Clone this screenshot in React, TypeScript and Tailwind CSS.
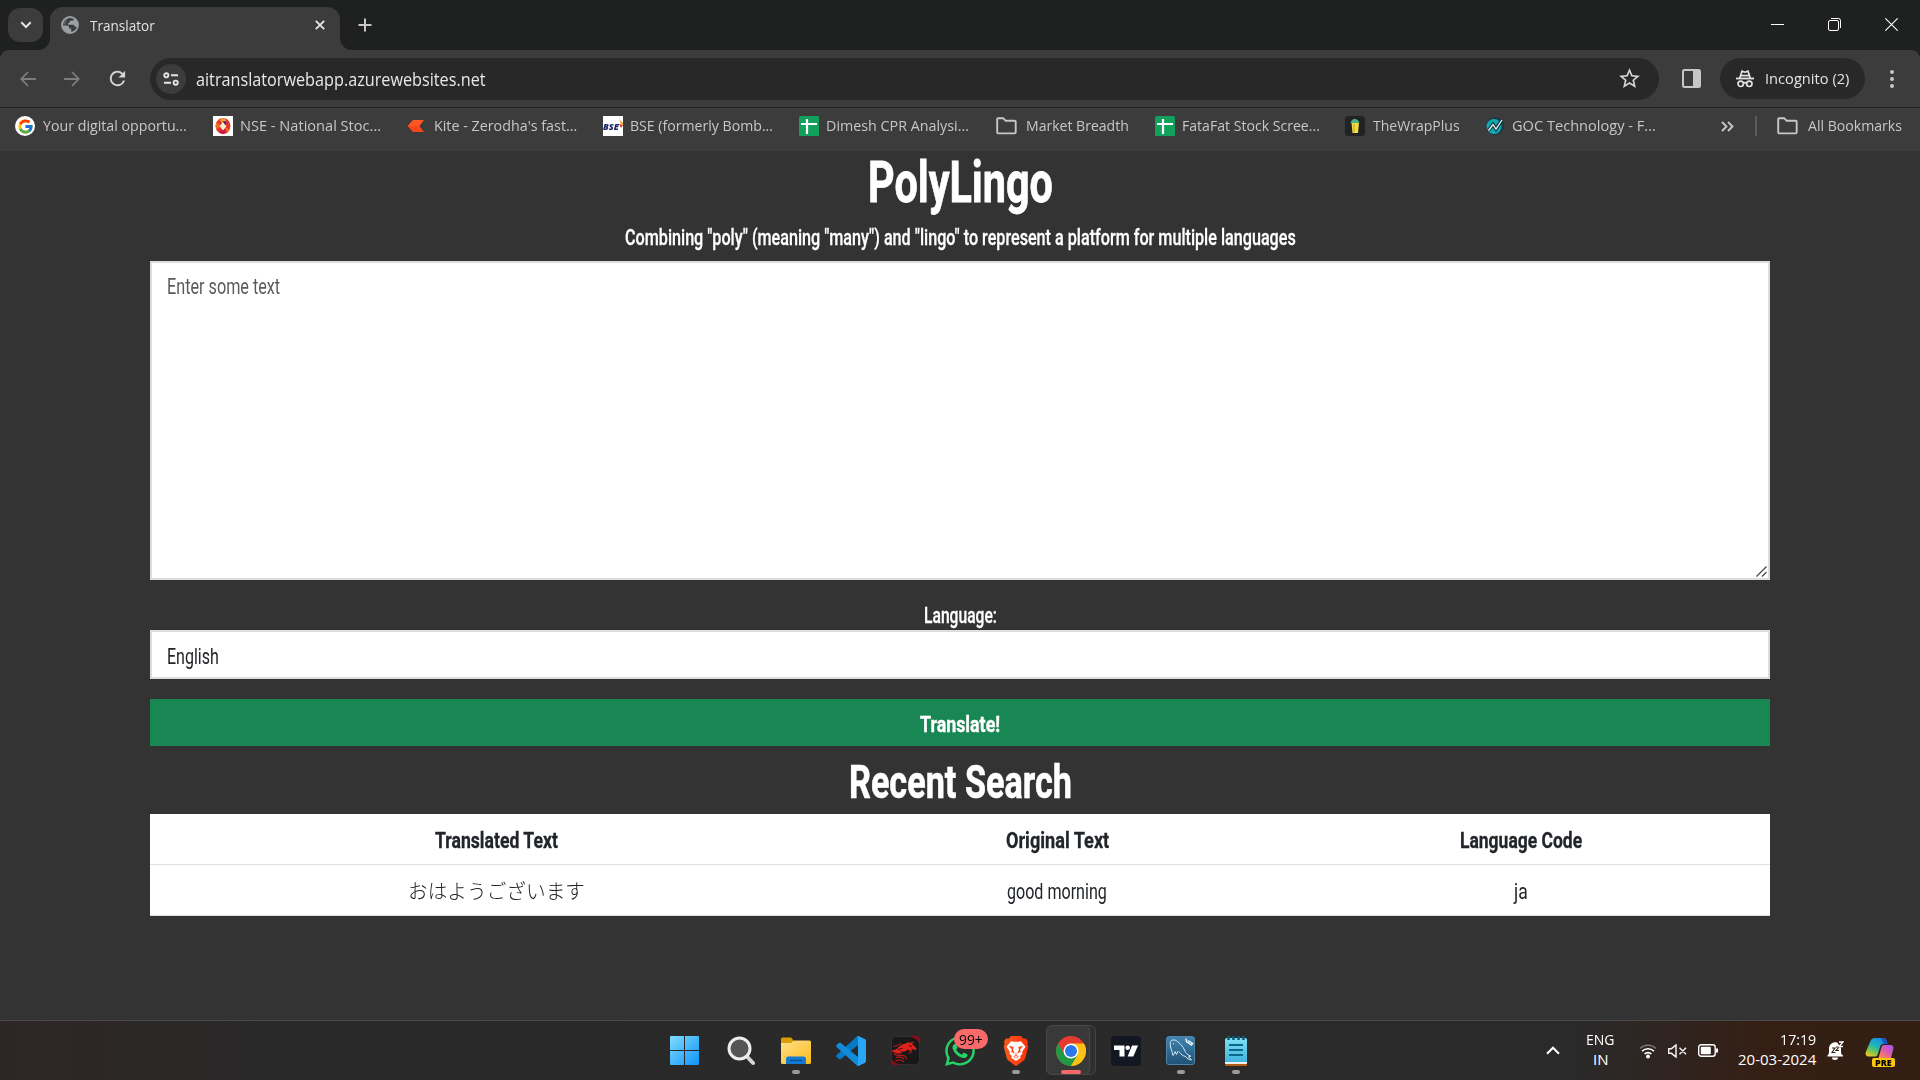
import React, { useLayoutEffect, useRef } from "react";
import { FcGoogle } from "react-icons/fc";
import { FaWhatsapp } from "react-icons/fa";
import { MdStarOutline, MdRefresh } from "react-icons/md";

/* Text squeezed horizontally so that it fills the width of its own box. */
function Fit({ className = "", children }: { className?: string; children: React.ReactNode }) {
  const outer = useRef<HTMLSpanElement>(null);
  const inner = useRef<HTMLSpanElement>(null);
  useLayoutEffect(() => {
    const o = outer.current;
    const i = inner.current;
    if (o && i) i.style.transform = `scaleX(${o.clientWidth / i.offsetWidth})`;
  });
  return (
    <span ref={outer} className={`block shrink-0 text-left ${className}`}>
      <span ref={inner} className="inline-block origin-left whitespace-nowrap">
        {children}
      </span>
    </span>
  );
}

function TabStrip() {
  return (
    <div className="flex h-[50px] items-start bg-[#1f2120] text-[#e3e3e3]">
      <div className="ml-2 mt-2 flex h-[34px] w-[35px] items-center justify-center rounded-xl bg-[#3c3c3c]">
        <svg width="12" height="8" viewBox="0 0 12 8" fill="none" stroke="currentColor" strokeWidth="2">
          <path d="M1.300 1.200 6 6l4.700-4.800" />
        </svg>
      </div>
      <div className="relative ml-[7px] mt-[7px] flex h-[43px] w-[290px] items-center rounded-t-[13px] bg-[#3c3c3c] pb-[8px] pl-[11px]">
        <svg className="absolute -left-3 bottom-0" width="12" height="12" viewBox="0 0 12 12">
          <path d="M12 0v12H0A12 12 0 0 0 12 0z" fill="#3c3c3c" />
        </svg>
        <svg className="absolute -right-3 bottom-0" width="12" height="12" viewBox="0 0 12 12">
          <path d="M0 0v12h12A12 12 0 0 1 0 0z" fill="#3c3c3c" />
        </svg>
        <svg width="18" height="18" viewBox="0 0 18 18">
          <circle cx="9" cy="9" r="8" fill="#3c3c3c" stroke="#9aa0a6" strokeWidth="1.800" />
          <path d="M1.500 9.500h4.500c1 0 2 .8 2 1.800v1.200h2.200V17A8 8 0 0 1 1.500 9.500z" fill="#9aa0a6" />
          <path d="M8.500 1.200C10.500 1 12.500 2 13 2.500c0 1.500-1 2.200-2.500 2.200H8.800v2H7v2h5c1.200 0 1.800 1 1.800 2h1.400c.8 0 1.300.4 1.500 1A8 8 0 0 0 9 1z" fill="#9aa0a6" />
          <path d="M1.500 8.500A8 8 0 0 1 8 1.200L6 4 4.500 8.500z" fill="#9aa0a6" fillOpacity=".35" />
        </svg>
        <Fit className="ml-[11px] w-[65px] text-[15px] leading-5">Translator</Fit>
        <svg className="ml-[160px]" width="10" height="10" viewBox="0 0 10 10" stroke="currentColor" strokeWidth="1.900">
          <path d="M.8.8l8.400 8.400M9.200.8.8 9.200" />
        </svg>
      </div>
      <svg className="ml-[18px] mt-[18px]" width="14" height="14" viewBox="0 0 14 14" stroke="#c7c7c7" strokeWidth="2">
        <path d="M7 .5v13M.5 7h13" />
      </svg>
      <div className="ml-auto mr-[22px] mt-[18px] flex items-center gap-[44px] text-white">
        <svg width="13" height="13" viewBox="0 0 13 13" stroke="currentColor">
          <path d="M0 6.500h13" />
        </svg>
        <svg width="13" height="13" viewBox="0 0 13 13" fill="none" stroke="currentColor">
          <rect x=".5" y="2.500" width="10" height="10" rx="1.500" />
          <path d="M3 .5h7.500a2 2 0 0 1 2 2V10" />
        </svg>
        <svg width="13" height="13" viewBox="0 0 13 13" stroke="currentColor" strokeWidth="1.100">
          <path d="M.3.3l12.400 12.400M12.700.3.3 12.700" />
        </svg>
      </div>
    </div>
  );
}

function Incognito() {
  return (
    <svg width="18" height="18" viewBox="0 0 18 18" fill="none" stroke="#e3e3e3" strokeWidth="1.700">
      <path d="M0 8.500h18" strokeWidth="1.800" />
      <path d="M3.800 8 6 1.200l3 1 3-1L14.200 8" />
      <path d="M5 5.600h8" />
      <circle cx="4.700" cy="13.800" r="2.700" />
      <circle cx="13.300" cy="13.800" r="2.700" />
      <path d="M7.300 13.300c1-.8 2.400-.8 3.400 0" />
    </svg>
  );
}

function Toolbar() {
  return (
    <div className="bg-[#1f2120]">
      <div className="flex h-[57px] items-center rounded-t-[9px] bg-[#3c3c3c]">
        <svg className="ml-5" width="16" height="16" viewBox="0 0 16 16" fill="none" stroke="#7d7d7d" strokeWidth="1.800">
          <path d="M16 8H1.500M8 1 1.300 8 8 15" />
        </svg>
        <svg className="ml-7" width="16" height="16" viewBox="0 0 16 16" fill="none" stroke="#7d7d7d" strokeWidth="1.800">
          <path d="M0 8h14.500M8 1l6.700 7L8 15" />
        </svg>
        <MdRefresh className="ml-[26px] size-[23px] text-[#d4d4d4]" />
        <div className="ml-[21px] flex h-[42px] w-[1509px] items-center rounded-full bg-[#282828]">
          <div className="ml-1.5 flex size-[30px] items-center justify-center rounded-full bg-[#3c3c3c]">
            <svg width="16" height="14" viewBox="0 0 16 14" fill="none" stroke="#e3e3e3" strokeWidth="1.900">
              <circle cx="3.300" cy="3.300" r="2.100" />
              <path d="M8 3.300h7M1 10.700h7" />
              <circle cx="12.700" cy="10.700" r="2.100" />
            </svg>
          </div>
          <Fit className="ml-[10px] w-[290px] text-[17.500px] leading-6 text-[#e8e8e8]">aitranslatorwebapp.azurewebsites.net</Fit>
          <MdStarOutline className="ml-auto mr-[17px] size-[25px] text-[#d4d4d4]" />
        </div>
        <svg className="ml-[23px]" width="19" height="19" viewBox="0 0 19 19">
          <rect x="1" y="1" width="17" height="17" rx="1.500" fill="none" stroke="#c7c7c7" strokeWidth="2" />
          <path d="M11 1h7v17h-7z" fill="#c7c7c7" />
        </svg>
        <div className="ml-[19px] flex h-[41px] w-[145px] items-center rounded-full bg-[#282828] pl-4">
          <Incognito />
          <Fit className="-mt-px ml-[11px] w-[84px] text-[15px] leading-5 text-[#e3e3e3]">Incognito (2)</Fit>
        </div>
        <div className="ml-[25px] flex flex-col gap-[3px]">
          <span className="size-1 rounded-full bg-[#c7c7c7]" />
          <span className="size-1 rounded-full bg-[#c7c7c7]" />
          <span className="size-1 rounded-full bg-[#c7c7c7]" />
        </div>
      </div>
    </div>
  );
}

function Folder() {
  return (
    <svg width="21" height="18" viewBox="0 0 21 18" fill="none" stroke="#c7c7c7" strokeWidth="1.900" strokeLinejoin="round">
      <path d="M1.200 2.200a1 1 0 0 1 1-1h5l2.300 2.500h9.200a1 1 0 0 1 1 1v10.500a1.200 1.200 0 0 1-1.200 1.200H2.400a1.200 1.200 0 0 1-1.200-1.200z" />
    </svg>
  );
}

function Sheet() {
  return (
    <svg width="20" height="20" viewBox="0 0 20 20">
      <rect width="20" height="20" rx="1.500" fill="#12a05c" />
      <path d="M2 8h16M8 3v15" stroke="#fff" strokeWidth="2.200" />
    </svg>
  );
}

function Nse() {
  return (
    <svg width="20" height="20" viewBox="0 0 20 20">
      <path d="M0 0h20v20H0z" fill="#fff" />
      <path d="M10 2l4 1 2.500 3L17.500 10l-1 4-2.500 3-4 1.200L6 17l-2.500-3-1-4 1-4L6 3z" fill="#e3342f" />
      <path d="M10 2l3.500 2L10 8 6.500 4z" fill="#f7a12c" />
      <path d="M3.500 6 8 10l-4.500 4L2.500 10zM16.500 14 12 10.500 14 17z" fill="#ef6a25" />
      <path d="M10 18 6.500 16.500 10 12l3.500 4.500z" fill="#c91a50" />
      <path d="M10 6l3.500 4-3.500 4.500L6.500 10z" fill="#fdeccb" />
      <path d="m9.500 5 4 .5-1 4z" fill="#45307f" />
    </svg>
  );
}

function Kite() {
  return (
    <svg width="20" height="20" viewBox="0 0 20 20">
      <path d="M1.500 10 7 4h11l-4.500 6z" fill="#ff5722" />
      <path d="M1.500 10l5.500 6h11l-4.500-6z" fill="#f6461a" />
    </svg>
  );
}

function Bse() {
  return (
    <span className="relative flex size-5 items-center overflow-hidden bg-white">
      <Fit className="w-4 pt-px text-[8px] font-black italic leading-3 text-[#1f2a6b]">BSE</Fit>
      <svg className="absolute right-0 top-0.5" width="4" height="11" viewBox="0 0 4 11">
        <path d="M0 1 4 5v2L2 6z" fill="#f5a11c" />
        <path d="M0 6l4 1-2 3z" fill="#e0342b" />
      </svg>
    </span>
  );
}

function Wrap() {
  return (
    <svg width="20" height="20" viewBox="0 0 20 20">
      <rect width="20" height="20" rx="3" fill="#222" />
      <path d="M6.500 6.500h7.500l-1 10.500H7.500z" fill="#f5dd45" />
      <path d="M5.500 7c.5-2.500 2-3.500 4-4.200L13 4l1.500 3z" fill="#4bb08b" />
      <path d="M9 8v8" stroke="#b99d20" />
    </svg>
  );
}

function Goc() {
  return (
    <svg width="20" height="20" viewBox="0 0 20 20">
      <circle cx="10" cy="10" r="9" fill="#1b3b41" />
      <circle cx="9" cy="10.500" r="7.500" fill="#12a9b4" />
      <path d="m3.500 14.500 4.500-6 3 4.500 6-9" fill="none" stroke="#12353b" strokeWidth="3.600" />
      <path d="m3.500 14.500 4.500-6 3 4.500 6-9" fill="none" stroke="#e8f6f6" strokeWidth="1.300" />
    </svg>
  );
}

function Bookmark({ icon, text, box, width }: { icon: React.ReactNode; text: string; box: string; width: string }) {
  return (
    <div className={`flex shrink-0 items-center ${box}`}>
      {icon}
      <Fit className={`-mt-0.5 ml-auto text-[15px] leading-5 ${width}`}>{text}</Fit>
    </div>
  );
}

function BookmarkBar() {
  return (
    <div className="flex h-[44px] items-center border-t border-[#222423] bg-[#3c3c3c] pb-[7px] pl-[15px] text-[#c7c7c7]">
      <Bookmark
        icon={
          <span className="flex size-5 items-center justify-center rounded-full bg-white">
            <FcGoogle className="size-[17px]" />
          </span>
        }
        text="Your digital opportu..."
        box="w-[172px]"
        width="w-[144px]"
      />
      <Bookmark icon={<Nse />} text="NSE - National Stoc..." box="ml-[26px] w-[168px]" width="w-[141px]" />
      <Bookmark icon={<Kite />} text="Kite - Zerodha's fast..." box="ml-[25px] w-[171px]" width="w-[143px]" />
      <Bookmark icon={<Bse />} text="BSE (formerly Bomb..." box="ml-[26px] w-[170px]" width="w-[143px]" />
      <Bookmark icon={<Sheet />} text="Dimesh CPR Analysi..." box="ml-[26px] w-[170px]" width="w-[143px]" />
      <Bookmark icon={<Folder />} text="Market Breadth" box="ml-[27px] w-[133px]" width="w-[103px]" />
      <Bookmark icon={<Sheet />} text="FataFat Stock Scree..." box="ml-[26px] w-[165px]" width="w-[138px]" />
      <Bookmark icon={<Wrap />} text="TheWrapPlus" box="ml-[25px] w-[115px]" width="w-[87px]" />
      <Bookmark icon={<Goc />} text="GOC Technology - F..." box="ml-[25px] w-[171px]" width="w-[144px]" />
      <svg className="ml-[65px]" width="13" height="11" viewBox="0 0 13 11" fill="none" stroke="currentColor" strokeWidth="1.900">
        <path d="m1 1 4.500 4.500L1 10M7 1l4.500 4.500L7 10" />
      </svg>
      <div className="ml-[21px] h-5 w-0.5 bg-[#5c5c5c]" />
      <Bookmark icon={<Folder />} text="All Bookmarks" box="ml-[20px] w-[125px]" width="w-[94px]" />
    </div>
  );
}

const headCell = "flex items-center justify-center border-b border-[#dee2e6] pt-px font-bold";
const bodyCell = "flex items-center justify-center border-b border-[#dee2e6] pt-px";

function Page() {
  return (
    <main className="flex h-[869px] flex-col items-stretch bg-[#333333] px-[150px] font-['Roboto','Noto_Sans_CJK_JP',sans-serif] text-[22.500px] text-white">
      <h1 className="flex h-[66px] justify-center">
        <Fit className="-mt-px w-[185px] text-[57px] font-bold leading-[66px] [-webkit-text-stroke:0.8px_white]">PolyLingo</Fit>
      </h1>
      <p className="flex h-10 justify-center">
        <Fit className="w-[671px] font-medium leading-10 [-webkit-text-stroke:0.3px_white]">
          Combining "poly" (meaning "many") and "lingo" to represent a platform for multiple languages
        </Fit>
      </p>
      <div className="mt-1 flex h-[319px] justify-between border-2 border-[#dddddd] bg-white">
        <Fit className="ml-[15px] mt-[8px] w-[113px] leading-[30px] text-[#595c5f]">Enter some text</Fit>
        <svg className="mb-px mr-px self-end" width="11" height="11" viewBox="0 0 11 11" stroke="#444" strokeWidth="1.200">
          <path d="M.5 10.500l10-10M6 10.500l4.500-4.500" />
        </svg>
      </div>
      <div className="mt-[21px] flex h-[29px] justify-center">
        <Fit className="w-[73px] font-medium leading-7 [-webkit-text-stroke:0.3px_white]">Language:</Fit>
      </div>
      <div className="flex h-[49px] items-center border-2 border-[#dddddd] bg-white pl-[15px] pt-[2px] text-[#212529]">
        <Fit className="w-[52px] leading-7">English</Fit>
      </div>
      <div className="mt-5 flex h-[47px] items-center justify-center bg-[#198754] pt-0.5">
        <Fit className="w-[80px] font-bold leading-7 [-webkit-text-stroke:0.4px_white]">Translate!</Fit>
      </div>
      <h2 className="flex h-[68px] justify-center pt-[5px]">
        <Fit className="w-[223px] text-[46px] font-bold leading-[62px] [-webkit-text-stroke:0.6px_white]">Recent Search</Fit>
      </h2>
      <div className="grid h-[102px] grid-cols-[692px_430px_498px] grid-rows-2 bg-white text-[#212529]">
        <div className={headCell}>
          <Fit className="w-[123px] leading-7 [-webkit-text-stroke:0.3px_#212529]">Translated Text</Fit>
        </div>
        <div className={headCell}>
          <Fit className="w-[103px] leading-7 [-webkit-text-stroke:0.3px_#212529]">Original Text</Fit>
        </div>
        <div className={headCell}>
          <Fit className="w-[122px] leading-7 [-webkit-text-stroke:0.3px_#212529]">Language Code</Fit>
        </div>
        <div className={bodyCell}>
          <Fit className="w-[177px] font-['Noto_Sans_CJK_JP',sans-serif] text-[20px] font-light leading-7">おはようございます</Fit>
        </div>
        <div className={bodyCell}>
          <Fit className="w-[100px] leading-7">good morning</Fit>
        </div>
        <div className={bodyCell}>
          <Fit className="w-[14px] leading-7">ja</Fit>
        </div>
      </div>
    </main>
  );
}

function Cell({ children, mark }: { children: React.ReactNode; mark?: boolean }) {
  return (
    <div className="relative flex h-full w-[55px] shrink-0 items-center justify-center">
      {children}
      {mark && <span className="absolute bottom-[6px] h-1 w-2 rounded-full bg-[#9a9a9a]" />}
    </div>
  );
}

function Taskbar() {
  return (
    <footer className="flex h-[60px] items-center border-t border-[#4a4a4a] bg-[linear-gradient(90deg,#2d2624_0%,#2a2929_14%,#2a2a2a_82%,#2f2420_87%,#351f14_92%,#331e14_100%)] pl-[656px] text-white">
      <div className="flex h-full w-[57px] shrink-0 items-center justify-center">
        <svg width="29" height="29" viewBox="0 0 29 29">
          <defs>
            <linearGradient id="win" x1="0" y1="0" x2="1" y2="1">
              <stop offset="0" stopColor="#7fdcff" />
              <stop offset="1" stopColor="#0f94f7" />
            </linearGradient>
            <mask id="panes">
              <path d="M0 1a1 1 0 0 1 1-1h13v14H0zM15 0h13a1 1 0 0 1 1 1v13H15zM0 15h14v14H1a1 1 0 0 1-1-1zM15 15h14v13a1 1 0 0 1-1 1H15z" fill="#fff" />
            </mask>
          </defs>
          <rect width="29" height="29" fill="url(#win)" mask="url(#panes)" />
        </svg>
      </div>
      <Cell>
        <svg width="28" height="30" viewBox="0 0 28 30">
          <path d="m18.500 19 7.500 8" stroke="#d3d6da" strokeWidth="4" strokeLinecap="round" />
          <circle cx="12.500" cy="12.500" r="10.500" fill="#555" stroke="#eceef0" strokeWidth="3" />
        </svg>
      </Cell>
      <Cell mark>
        <svg width="30" height="28" viewBox="0 0 30 28">
          <defs>
            <linearGradient id="fold" x1="0" y1="0" x2="1" y2="1">
              <stop offset="0" stopColor="#ffe08a" />
              <stop offset="1" stopColor="#fbbb1b" />
            </linearGradient>
          </defs>
          <path d="M0 2a1.500 1.500 0 0 1 1.500-1.500H10L13 4v5H0z" fill="#dc9c0a" />
          <path d="M0 6h10l3-2.500h15.500A1.500 1.500 0 0 1 30 5v20.500a1.500 1.500 0 0 1-1.500 1.500h-27A1.500 1.500 0 0 1 0 25.500z" fill="url(#fold)" />
          <path d="M5 27v-5a2.500 2.500 0 0 1 2.500-2.500h15A2.500 2.500 0 0 1 25 22v5z" fill="#1379d2" />
          <path d="M9 23.500h12" stroke="#0a4f93" strokeWidth="1.200" />
        </svg>
      </Cell>
      <Cell>
        <svg width="30" height="30" viewBox="0 0 30 30">
          <path d="M22 0v9L4.500 23.200a1.200 1.200 0 0 1-1.600-.1L.6 20.900a1.200 1.200 0 0 1 0-1.800L20.600.8z" fill="#0879c4" />
          <path d="M22 30v-9L4.500 6.800a1.200 1.200 0 0 0-1.600.1L.6 9.100a1.200 1.200 0 0 0 0 1.800l20 18.300z" fill="#128bd8" />
          <path d="M20.500.7c.5-.5 1.500-.9 2.300-.5l6 2.800c.8.400 1.200 1 1.200 1.800v20.400c0 .8-.4 1.400-1.200 1.800l-6 2.800c-.8.400-1.800 0-2.300-.5 1 .7 1.500.1 1.500-.8V1.500c0-.9-.5-1.500-1.500-.8z" fill="#2aa7f4" />
        </svg>
      </Cell>
      <Cell>
        <svg width="29" height="29" viewBox="0 0 29 29">
          <rect x=".5" y=".5" width="28" height="28" rx="4" fill="#181818" stroke="#303030" />
          <path d="M19.500 0H25a4 4 0 0 1 4 4v5c-1-2-1.500-4-3.500-5.500S21.500 2 19.500 0zM8.500 29H4a4 4 0 0 1-4-4v-1.500c2 0 2.500 2 4 3s3.500 1 4.500 2.500z" fill="#8e0b18" />
          <path d="M1 14.500c3.500-.5 5-1.500 6.500-3.500L11 8.500l5-1.500 1.500-1.800-.3 1.800c2-.8 4.500-1 6.500-.5l-3 1.200 2.600 2.300 2 2-.2 2.500-2.600-1.200-2.500.3 1.500 1.800-2.500-.3-2-1.600-2.500 1.800-3.500.5-3-.3 4 1.500-3.500.6c-2.500 0-5-1.200-7.500-2.100z" fill="#e0201b" />
          <path d="M3 17.500c2 2 5 2 8 2s4.500 1.500 4.500 4M5 21.500c2.500-1 6-.5 8 2M4.500 25c3-1.800 6-1 8.500 1M20 14c.8 1.800-.4 3.200-2.200 3.200" fill="none" stroke="#c51a18" strokeWidth="1.100" />
          <path d="M2 10.500c3-.8 5-1 8-3" fill="none" stroke="#e0201b" strokeWidth=".8" />
          <path d="M18 9.500l3 1.200M7 13.500l4.500-1.200" stroke="#181818" strokeWidth=".9" />
        </svg>
      </Cell>
      <Cell>
        <FaWhatsapp className="-ml-px mt-px size-[34px] text-[#25d366]" />
        <span className="absolute left-[21px] top-2 flex h-5 w-[34px] items-center justify-center rounded-full bg-[#f8696a] text-black">
          <Fit className="w-6 text-[15px] leading-5">99+</Fit>
        </span>
      </Cell>
      <Cell mark>
        <svg width="26" height="30" viewBox="0 0 26 30">
          <defs>
            <linearGradient id="brave" x1="0" y1="0" x2="1" y2="0">
              <stop offset="0" stopColor="#fb5a1c" />
              <stop offset="1" stopColor="#fb2f0c" />
            </linearGradient>
          </defs>
          <path d="M8 0h10l2.500 2.800L23 2.500l2 3-.6 2.300.9 3L22.300 22c-.3 1.200-1 2-2 2.700L14 29.400c-.7.500-1.300.5-2 0l-6.300-4.700c-1-.7-1.700-1.500-2-2.700L.7 10.800l.9-3L1 5.500l2-3 2.500.3z" fill="url(#brave)" />
          <path d="M8 5.200l2.500.5h5l2.500-.5 4.500 5.500-3.300 5 .3 2-2.500 2.500 1 1.300L13 25l-5-3.500 1-1.300-2.500-2.500.3-2-3.300-5z" fill="#fff" />
          <path d="M5.800 9.800l5 1.200-.8 2.600 1.200 3L13 18l1.800-1.400 1.200-3-.8-2.600 5-1.200-3 3.700.4 2.500-3 1.200L13 18.800l-1.600-1.600-3-1.200.4-2.500zM13 18.500l2.800 2.200L13 22.500l-2.800-1.800z" fill="#fb4616" />
          <path d="M13 19.400l1.800 1.300L13 21.800l-1.800-1.100z" fill="#fff" />
        </svg>
      </Cell>
      <div className="relative flex h-full w-[55px] shrink-0 items-center justify-center">
        <span className="absolute left-3 top-1 h-[50px] w-[41px] rounded-md border border-[#454545] bg-[#2f2f2f]" />
        <span className="absolute left-[3px] top-1 h-[50px] w-[44px] rounded-md border border-[#484848] bg-[#393939]" />
        <svg className="relative" width="30" height="30" viewBox="0 0 30 30">
          <circle cx="15" cy="15" r="15" fill="#e33b2e" />
          <path d="M15 7.500h13A15 15 0 0 1 14.500 30l7-11.200z" fill="#fbc116" />
          <path d="M2 7.500 8.500 18.800 15 22.500l6.500-3.700L14.800 30A15 15 0 0 1 2 7.500z" fill="#229a45" />
          <circle cx="15" cy="15" r="7.500" fill="#fff" />
          <circle cx="15" cy="15" r="6" fill="#2b78ea" />
        </svg>
        <span className="absolute bottom-[6px] h-1 w-5 rounded-full bg-[#f8696a]" />
      </div>
      <Cell>
        <svg width="30" height="30" viewBox="0 0 30 30">
          <rect width="30" height="30" rx="4" fill="#131722" />
          <path d="M3 9.500h10.500V20.500H8.500V14H3z" fill="#fff" />
          <circle cx="16.700" cy="11.700" r="2.300" fill="#fff" />
          <path d="M21 9.500h6l-4.700 11h-5.700z" fill="#fff" />
        </svg>
      </Cell>
      <Cell mark>
        <svg width="29" height="29" viewBox="0 0 29 29">
          <defs>
            <linearGradient id="sql" x1="0" y1="0" x2="0" y2="1">
              <stop offset="0" stopColor="#4085b4" />
              <stop offset="1" stopColor="#1f5275" />
            </linearGradient>
          </defs>
          <rect x=".5" y=".5" width="28" height="28" rx="2.500" fill="url(#sql)" stroke="#4d86a8" />
          <path d="M7 19.500C6.500 15.500 3.500 11 4.300 6.500 5 3.500 8.500 3 11.500 5.500c3 2.300 5.500 5 7 8.500.8 2 1.500 3.500 3.200 4.500l3 1.700-2.200.6 3 3.200c-2.500-.3-4.500-1.500-5.800-3.500-2.700-.5-4.700-2-6.700-5" fill="none" stroke="#dce9f2" strokeWidth="1" strokeLinejoin="round" />
          <path d="M7 19.500c1-.8 1.200-2.500 2-4l1.500 3c.6-1 .8-2.200 1.500-3.500M7 7.300l1 .8" fill="none" stroke="#dce9f2" strokeWidth="1" />
          <path d="M20 2.500l.5 3L25.500 9l1-1.500L22 4.500" fill="none" stroke="#eef4f8" strokeWidth="1.500" />
        </svg>
      </Cell>
      <Cell mark>
        <svg width="22" height="30" viewBox="0 0 22 30">
          <defs>
            <linearGradient id="note" x1="0" y1="0" x2="0" y2="1">
              <stop offset="0" stopColor="#7fe0f5" />
              <stop offset="1" stopColor="#3fb4dc" />
            </linearGradient>
          </defs>
          <path d="M0 27h22v1.500a1.500 1.500 0 0 1-1.500 1.500h-19A1.500 1.500 0 0 1 0 28.500z" fill="#b65c12" />
          <path d="M0 25h22v3H0z" fill="#eee" />
          <path d="M0 3.500A1.500 1.500 0 0 1 1.500 2h19A1.500 1.500 0 0 1 22 3.500V26H0z" fill="url(#note)" />
          <path d="M4 9h14M4 14h14M4 19h14" stroke="#0b6790" strokeWidth="1.800" />
          <path d="M3.500 0v4M8.500 0v4M13.500 0v4M18.500 0v4" stroke="#0f5c80" strokeWidth="2.600" />
        </svg>
      </Cell>
      <svg className="ml-[283px] shrink-0" width="14" height="9" viewBox="0 0 14 9" fill="none" stroke="#fff" strokeWidth="2">
        <path d="m1 7.700 6-6 6 6" />
      </svg>
      <div className="-mt-[3px] ml-[26px] flex w-[29px] shrink-0 flex-col items-center text-[15px] leading-5">
        <Fit className="w-[29px]">ENG</Fit>
        <Fit className="w-[15px]">IN</Fit>
      </div>
      <svg className="ml-[24px] shrink-0" width="18" height="16" viewBox="0 0 18 16" fill="none">
        <path d="M1 5.500a11.300 11.300 0 0 1 16 0" stroke="#777" strokeWidth="1.500" />
        <path d="M3 8.300a8.300 8.300 0 0 1 12 0M5.600 11a4.800 4.800 0 0 1 6.800 0" stroke="#fff" strokeWidth="1.600" />
        <circle cx="9" cy="13.500" r="2" fill="#fff" />
      </svg>
      <svg className="ml-[11px] shrink-0" width="19" height="14" viewBox="0 0 19 14" fill="none" stroke="#f0f0f0" strokeWidth="1.500">
        <path d="M.7 4.700h2.800L8 1v12L3.500 9.300H.7zM11.500 3.700l6.500 6.600M18 3.700l-6.500 6.600" />
      </svg>
      <svg className="ml-[11px] shrink-0" width="20" height="13" viewBox="0 0 20 13" fill="none">
        <rect x=".7" y=".7" width="16.500" height="11.600" rx="2.500" stroke="#fff" strokeWidth="1.400" />
        <rect x="2.800" y="2.800" width="10" height="7.400" rx="1" fill="#fff" />
        <path d="M19 4.500v4" stroke="#fff" strokeWidth="2" />
      </svg>
      <div className="-mt-[4px] ml-[20px] flex w-[78px] shrink-0 flex-col items-end text-[15px] leading-5">
        <Fit className="w-[36px]">17:19</Fit>
        <Fit className="w-[78px]">20-03-2024</Fit>
      </div>
      <svg className="ml-[11px] shrink-0" width="17" height="19" viewBox="0 0 17 19">
        <path d="M.5 14.500c1-1 1.500-2 1.500-4V7A6 6 0 0 1 8 1.300h2L14 7v3.500c0 2 .5 3 2 4v1H.5zM5 16.500h6a3 2.500 0 0 1-6 0z" fill="#fff" />
        <path d="M5 7h3l-3 4.500h3.500M9 6h3L9 9.500h3" stroke="#351f14" strokeWidth="1.100" fill="none" />
        <path d="M12 1h4l-4 4.500h4" stroke="#fff" strokeWidth="1.300" fill="none" />
      </svg>
      <div className="relative ml-[21px] mt-0.5 h-[30px] w-[30px] shrink-0">
        <svg width="30" height="30" viewBox="0 0 30 30">
          <defs>
            <linearGradient id="cpa" x1="0.700" y1="0" x2="0.200" y2="1">
              <stop offset="0" stopColor="#168be6" />
              <stop offset=".45" stopColor="#1fb6b5" />
              <stop offset=".75" stopColor="#7cc64b" />
              <stop offset="1" stopColor="#f2c32c" />
            </linearGradient>
            <linearGradient id="cpb" x1="1" y1="0" x2="0.200" y2="1">
              <stop offset="0" stopColor="#9b5cf0" />
              <stop offset=".5" stopColor="#d957b4" />
              <stop offset="1" stopColor="#f8884c" />
            </linearGradient>
          </defs>
          <path d="M10 1h8.500c1.700 0 2.500 1 3 2.500L22.500 7h-4c-2 0-3 1-3.500 3l-2.300 7.500c-.5 1.500-1.500 2-3 2H4c-3 0-4-2-3-5L5.500 4c.6-2 2.500-3 4.500-3z" fill="url(#cpa)" />
          <path d="M16 1h2.500c1.700 0 2.500 1 3 2.500L22.500 7h-4z" fill="#1a56c4" />
          <path d="M19 8h6.500c2.500 0 3.500 2 2.700 4.500L26 21H13.500L16.500 10c.4-1.300 1.200-2 2.500-2z" fill="url(#cpb)" />
        </svg>
        <span className="absolute bottom-0 left-[7px] flex h-[9px] w-[23px] items-center justify-center rounded-[2px] bg-[#fbc80e] text-black">
          <Fit className="w-[17px] text-[8.500px] font-extrabold leading-[9px]">PRE</Fit>
        </span>
      </div>
    </footer>
  );
}

export default function App() {
  return (
    <div className="h-[1080px] w-[1920px] overflow-hidden bg-[#333333] font-['Open_Sans','Noto_Sans',sans-serif]">
      <TabStrip />
      <Toolbar />
      <BookmarkBar />
      <Page />
      <Taskbar />
    </div>
  );
}
